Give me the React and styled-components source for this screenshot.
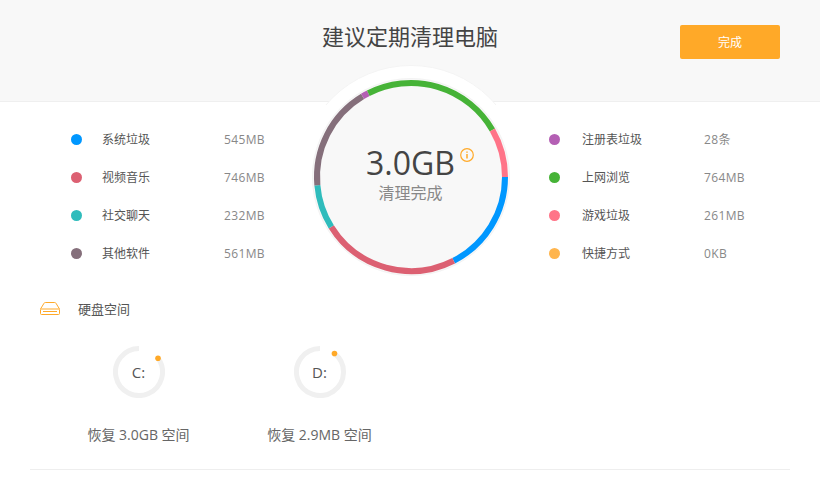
import styled, { createGlobalStyle } from "styled-components";

const GlobalStyle = createGlobalStyle`
  html, body {
    margin: 0;
    padding: 0;
    background: #fff;
    font-family: "Open Sans", "Noto Sans CJK SC", sans-serif;
  }
`;

const Page = styled.div`
  position: relative;
  width: 820px;
  height: 500px;
  overflow: hidden;
`;

const Header = styled.header`
  box-sizing: border-box;
  height: 102px;
  background: #f8f8f8;
  border-bottom: 1px solid #efefef;
  padding: 25px 40px 0 0;
  display: flex;
  justify-content: flex-end;
  align-items: flex-start;
`;

const Title = styled.h1`
  position: absolute;
  left: 0;
  right: 0;
  top: 21px;
  margin: 0;
  text-align: center;
  font-size: 22px;
  line-height: 30px;
  font-weight: 400;
  color: #444;
`;

const DoneButton = styled.button`
  width: 100px;
  height: 34px;
  border: 0;
  border-radius: 2px;
  background: #ffa928;
  color: #fff;
  font-family: inherit;
  font-size: 12px;
  padding: 0;
`;

const Stats = styled.section`
  display: grid;
  grid-template-columns: 240px 240px;
  column-gap: 238px;
  padding: 18px 0 0 71px;
`;

const StatList = styled.ul`
  list-style: none;
  margin: 0;
  padding: 0;
`;

const StatRow = styled.li`
  height: 38px;
  display: grid;
  grid-template-columns: 11px ${(p) => p.$nameWidth}px 1fr;
  column-gap: ${(p) => p.$gap}px;
  align-items: center;
  font-size: 12px;
`;

const Dot = styled.span`
  width: 11px;
  height: 11px;
  border-radius: 50%;
  background: ${(p) => p.$color};
`;

const StatName = styled.span`
  color: #555;
`;

const StatValue = styled.span`
  color: #888;
  letter-spacing: 0.35px;
`;

const RingCutout = styled.div`
  position: absolute;
  left: 298.5px;
  top: 65px;
  box-sizing: border-box;
  width: 224px;
  height: 224px;
  border-radius: 50%;
  background: #fff;
  border: 1px solid #f4f4f4;
  clip-path: inset(0 0 184px 0);
`;

const Ring = styled.div`
  position: absolute;
  left: 310.5px;
  top: 77px;
  box-sizing: border-box;
  width: 200px;
  height: 200px;
  padding-bottom: 6px;
  display: flex;
  flex-direction: column;
  align-items: center;
  justify-content: center;
`;

const RingSvg = styled.svg`
  position: absolute;
  inset: 0;
`;

const RingValue = styled.div`
  position: relative;
  font-size: 32px;
  line-height: 38px;
  color: #444;
`;

const InfoMark = styled.svg`
  position: absolute;
  left: 94px;
  top: 4px;
`;

const RingLabel = styled.div`
  position: relative;
  font-size: 16px;
  line-height: 22px;
  color: #888;
`;

const Disks = styled.section`
  margin: 0 30px;
  padding: 18px 0 25px;
  border-bottom: 1px solid #eee;
`;

const DiskHead = styled.div`
  display: flex;
  align-items: center;
  gap: 18px;
  padding-left: 10px;
  height: 36px;
  font-size: 13px;
  color: #555;
`;

const DiskGrid = styled.div`
  display: grid;
  grid-template-columns: repeat(2, 181px);
  padding: 20px 0 0 18px;
`;

const DiskCard = styled.div`
  display: flex;
  flex-direction: column;
  align-items: center;
`;

const Gauge = styled.div`
  position: relative;
  width: 52px;
  height: 52px;
  display: flex;
  align-items: center;
  justify-content: center;
  font-size: 15px;
  color: #555;
`;

const GaugeSvg = styled.svg`
  position: absolute;
  inset: 0;
`;

const Caption = styled.div`
  margin-top: 28px;
  font-size: 14px;
  line-height: 18px;
  color: #666;
  white-space: pre;
`;

const arcPath = (cx, cy, r, from, to) => {
  const rad = (d) => (d * Math.PI) / 180;
  const x1 = cx + r * Math.cos(rad(from));
  const y1 = cy + r * Math.sin(rad(from));
  const x2 = cx + r * Math.cos(rad(to));
  const y2 = cy + r * Math.sin(rad(to));
  const large = to - from > 180 ? 1 : 0;
  return `M${x1} ${y1}A${r} ${r} 0 ${large} 1 ${x2} ${y2}`;
};

const leftStats = [
  { name: "系统垃圾", value: "545MB", color: "#0097ff" },
  { name: "视频音乐", value: "746MB", color: "#dc6072" },
  { name: "社交聊天", value: "232MB", color: "#2fbcbc" },
  { name: "其他软件", value: "561MB", color: "#856f7b" },
];

const rightStats = [
  { name: "注册表垃圾", value: "28条", color: "#b45fb4" },
  { name: "上网浏览", value: "764MB", color: "#46b337" },
  { name: "游戏垃圾", value: "261MB", color: "#ff7488" },
  { name: "快捷方式", value: "0KB", color: "#ffb54d" },
];

const segments = [
  { from: 0, to: 63, color: "#0097ff" },
  { from: 63, to: 148, color: "#dc6072" },
  { from: 148, to: 175, color: "#2fbcbc" },
  { from: 175, to: 239, color: "#856f7b" },
  { from: 239, to: 243, color: "#b45fb4" },
  { from: 243, to: 330, color: "#46b337" },
  { from: 330, to: 360, color: "#ff7488" },
];

const disks = [
  { letter: "C:", caption: "恢复 3.0GB 空间", angle: -36 },
  { letter: "D:", caption: "恢复 2.9MB 空间", angle: -52 },
];

const App = () => {
  const renderStats = (list, nameWidth, gap) =>
    list.map((s) => (
      <StatRow key={s.name} $nameWidth={nameWidth} $gap={gap}>
        <Dot $color={s.color} />
        <StatName>{s.name}</StatName>
        <StatValue>{s.value}</StatValue>
      </StatRow>
    ));

  return (
    <Page>
      <GlobalStyle />
      <Header>
        <Title>建议定期清理电脑</Title>
        <DoneButton>完成</DoneButton>
      </Header>
      <Stats>
        <StatList>{renderStats(leftStats, 102, 20)}</StatList>
        <StatList>{renderStats(rightStats, 100, 22)}</StatList>
      </Stats>
      <Disks>
        <DiskHead>
          <svg width="20" height="13" viewBox="0 0 20 13" fill="none" stroke="#ffa928" strokeWidth="1">
            <path d="M.5 7 4 1.3A1.5 1.5 0 0 1 5.3.5h9.4a1.5 1.5 0 0 1 1.3.8L19.5 7" />
            <rect x=".5" y="7" width="19" height="5.5" rx="1" />
            <path d="M3 9.5h14" />
          </svg>
          硬盘空间
        </DiskHead>
        <DiskGrid>
          {disks.map((d) => (
            <DiskCard key={d.letter}>
              <Gauge>
                <GaugeSvg width="52" height="52" viewBox="0 0 52 52" fill="none">
                  <path
                    d={arcPath(26, 26, 23.5, d.angle, 270)}
                    stroke="#f0f0f0"
                    strokeWidth="5"
                  />
                  <circle
                    cx={26 + 23.5 * Math.cos((d.angle * Math.PI) / 180)}
                    cy={26 + 23.5 * Math.sin((d.angle * Math.PI) / 180)}
                    r="2.8"
                    fill="#ffa928"
                  />
                </GaugeSvg>
                {d.letter}
              </Gauge>
              <Caption>{d.caption}</Caption>
            </DiskCard>
          ))}
        </DiskGrid>
      </Disks>
      <RingCutout />
      <Ring>
        <RingSvg width="200" height="200" viewBox="0 0 200 200" fill="none">
          <circle cx="100" cy="100" r="98.5" fill="#f8f8f8" stroke="#f3f3f3" />
          {segments.map((s) => (
            <path
              key={s.from}
              d={arcPath(100, 100, 94, s.from, s.to)}
              stroke={s.color}
              strokeWidth="6"
            />
          ))}
        </RingSvg>
        <RingValue>
          3.0GB
          <InfoMark width="14" height="14" viewBox="0 0 14 14" fill="none" stroke="#ffa928" strokeWidth="1.2">
            <circle cx="7" cy="7" r="6.3" />
            <path d="M7 6v4.5M7 3.4v1.4" strokeWidth="1.5" />
          </InfoMark>
        </RingValue>
        <RingLabel>清理完成</RingLabel>
      </Ring>
    </Page>
  );
};

export default App;
